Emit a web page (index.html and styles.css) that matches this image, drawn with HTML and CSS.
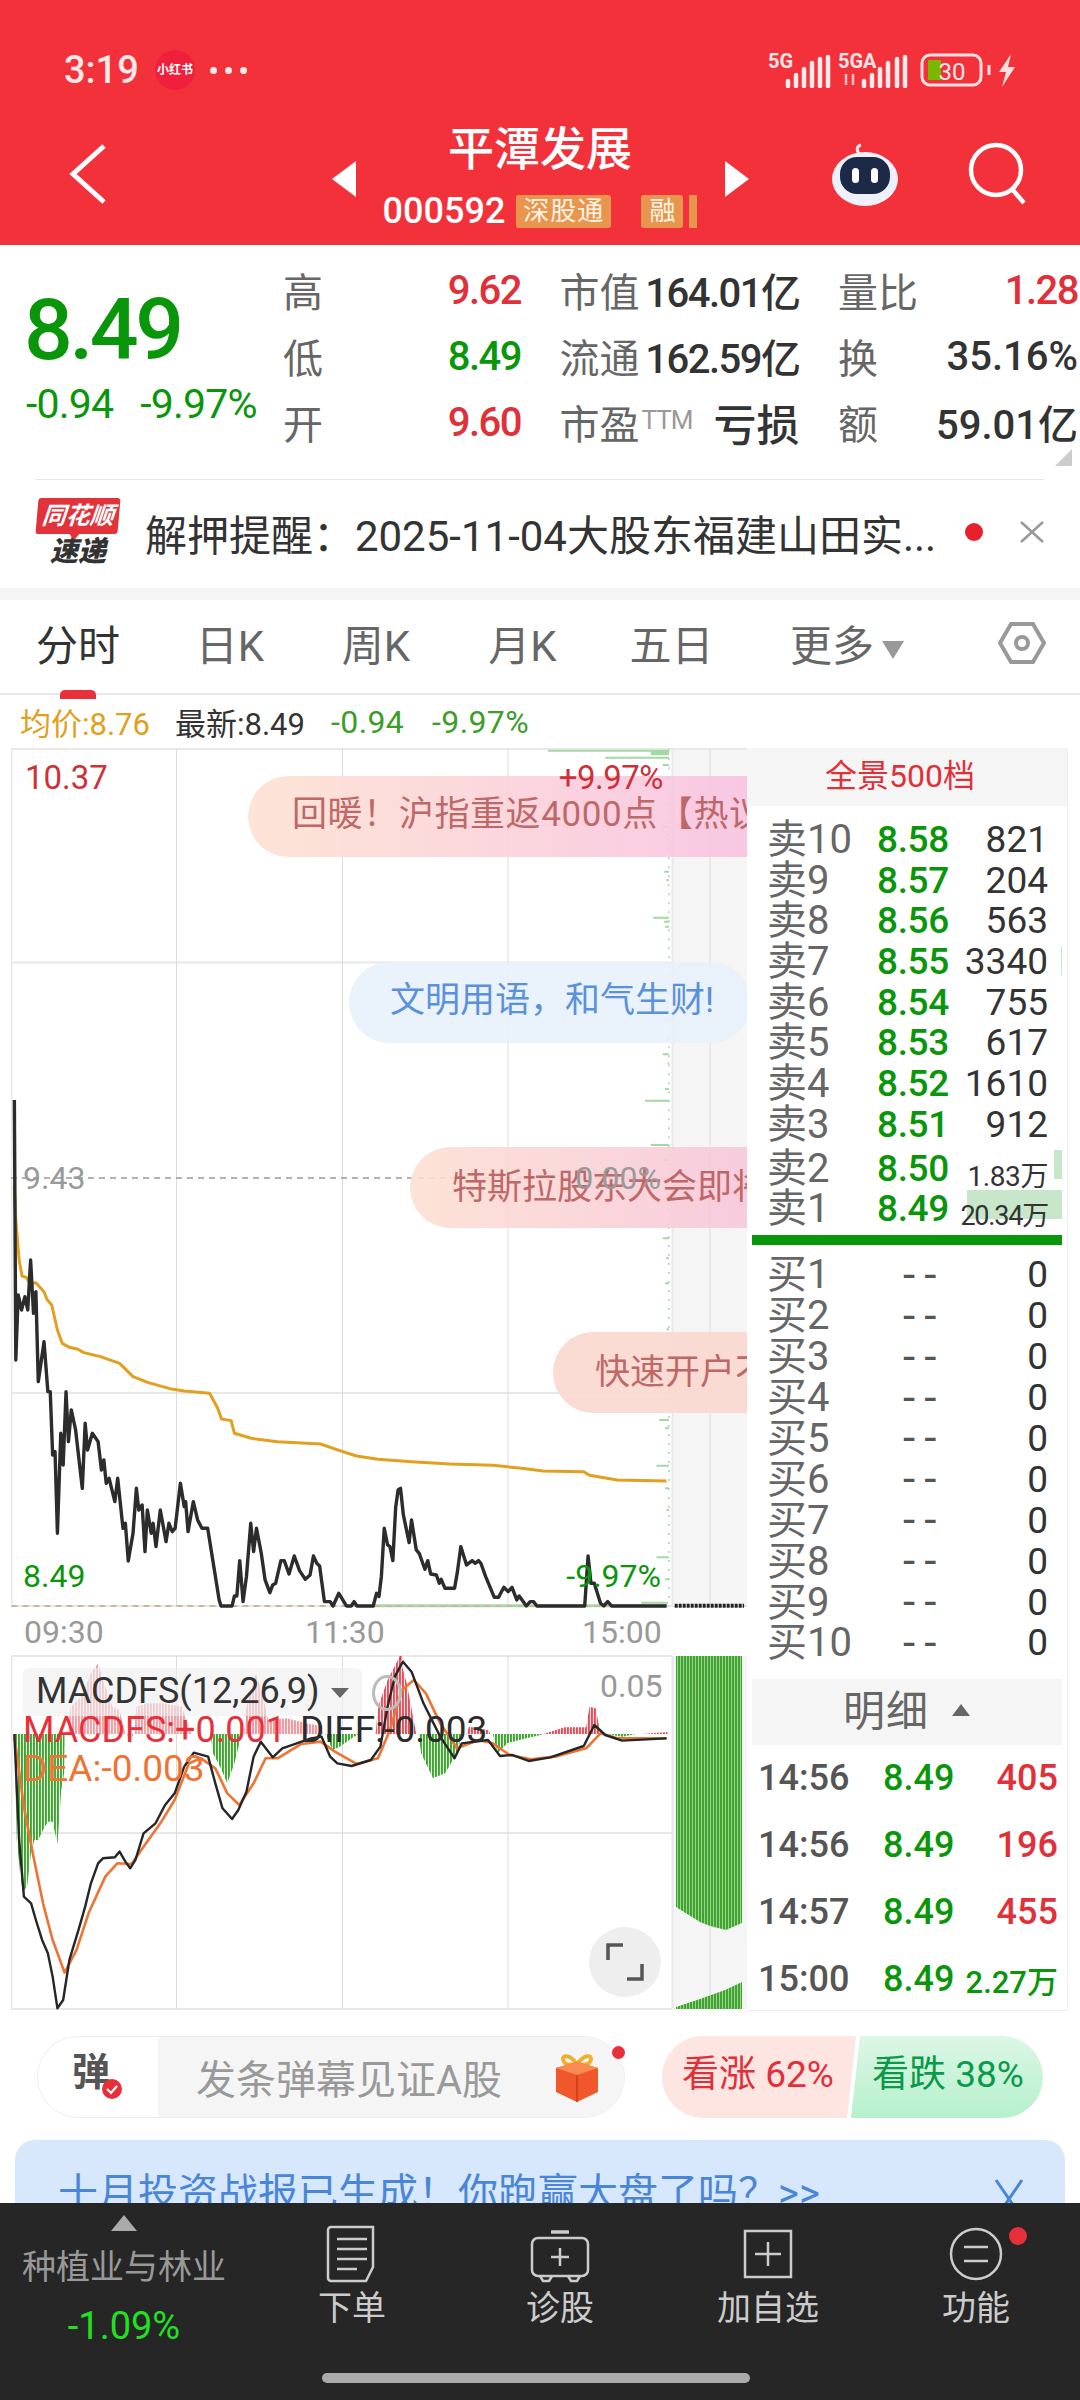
FILE: index.html
```html
<!DOCTYPE html>
<html>
<head lang="zh">
    <meta charset="UTF-8">
    <title>平潭发展</title>
    <link rel="stylesheet" href="styles.css">
</head>
<body>
<div class="page">
    <header class="top">
        <div class="status">
            <div class="status-left">
                <span class="clock">3:19</span>
                <span class="xhs">小红书</span>
                <span class="dots"><i></i><i></i><i></i></span>
            </div>
            <svg class="status-right" width="250" height="36" viewBox="768 52 250 36">
                <text x="768" y="68" class="sig">5G</text>
                <path d="M788 86v-5M796 86v-11M804 86v-17M812 86v-23M820 86v-27M828 86v-29" stroke="#fff" stroke-width="4.5" opacity=".9" stroke-linecap="round"/>
                <text x="838" y="68" class="sig">5GA</text>
                <path d="M846 74v11M853 74v11" stroke="#ffc0c0" stroke-width="2.5"/>
                <path d="M864 86v-5M872 86v-11M880 86v-17M888 86v-23M897 86v-27M905 86v-29" stroke="#fff" stroke-width="4.5" opacity=".9" stroke-linecap="round"/>
                <rect x="922" y="55" width="59" height="30" rx="8" fill="none" stroke="#ffe0e0" stroke-width="3"/>
                <rect x="928" y="60" width="13" height="20" fill="#7ab800"/>
                <text x="952" y="80" text-anchor="middle" class="batt">30</text>
                <path d="M989 65v10" stroke="#ffe0e0" stroke-width="3"/>
                <path d="M1011 54l-12 18h7l-4 15 13-20h-7z" fill="#ffe0e0"/>
            </svg>
        </div>
        <nav class="nav">
            <svg class="back" width="60" height="70" viewBox="0 0 60 70"><path d="M46 6L15 34l31 28" fill="none" stroke="#fff" stroke-width="5"/></svg>
            <div class="stock">
                <span class="tri-left"></span>
                <div class="stock-mid">
                    <div class="stock-name">平潭发展</div>
                    <div class="stock-sub">
                        <span class="code">000592</span>
                        <span class="tag">深股通</span>
                        <span class="tag tag-rong">融</span>
                        <span class="tag-cut"></span>
                    </div>
                </div>
                <span class="tri-right"></span>
            </div>
            <div class="nav-right">
                <svg width="70" height="66" viewBox="0 0 70 66">
                    <path d="M31 14c-5-3-5-9 0-10" fill="none" stroke="#ffe6e6" stroke-width="3"/>
                    <ellipse cx="35" cy="38" rx="33" ry="27" fill="#eef1fa"/>
                    <rect x="10" y="16" width="50" height="37" rx="17" fill="#1c2a48"/>
                    <rect x="22" y="27" width="7" height="15" rx="3.5" fill="#fff"/>
                    <rect x="41" y="27" width="7" height="15" rx="3.5" fill="#fff"/>
                </svg>
                <svg width="60" height="64" viewBox="0 0 60 64">
                    <circle cx="28" cy="29" r="25" fill="none" stroke="#fff" stroke-width="4.5"/>
                    <path d="M44 48l12 14" stroke="#fff" stroke-width="4.5"/>
                </svg>
            </div>
        </nav>
    </header>

    <section class="quote">
        <div class="price-box">
            <div class="price-big">8.49</div>
            <div class="price-change"><span>-0.94</span><span>-9.97%</span></div>
        </div>
        <div class="stats">
            <div class="cell"><span class="k">高</span><span class="v red">9.62</span></div>
            <div class="cell"><span class="k">市值</span><span class="v">164.01亿</span></div>
            <div class="cell"><span class="k">量比</span><span class="v red">1.28</span></div>
            <div class="cell"><span class="k">低</span><span class="v green">8.49</span></div>
            <div class="cell"><span class="k">流通</span><span class="v">162.59亿</span></div>
            <div class="cell"><span class="k">换</span><span class="v wide">35.16%</span></div>
            <div class="cell"><span class="k">开</span><span class="v red">9.60</span></div>
            <div class="cell"><span class="k">市盈<small>TTM</small></span><span class="v loss">亏损</span></div>
            <div class="cell"><span class="k">额</span><span class="v wide">59.01亿</span></div>
        </div>
        <span class="corner"></span>
    </section>

    <section class="news">
        <div class="logo">
            <div class="logo-top">同花顺</div>
            <div class="logo-bot">速递</div>
        </div>
        <div class="news-text">解押提醒：2025-11-04大股东福建山田实...</div>
        <span class="news-dot"></span>
        <svg width="26" height="22" viewBox="0 0 26 22"><path d="M2 1l22 20M24 1L2 21" stroke="#999" stroke-width="2.5"/></svg>
    </section>

    <section class="tabs">
        <div class="tab on">分时</div>
        <div class="tab">日K</div>
        <div class="tab">周K</div>
        <div class="tab">月K</div>
        <div class="tab">五日</div>
        <div class="tab">更多<i class="more"></i></div>
        <svg class="hex" width="48" height="44" viewBox="0 0 48 44">
            <path d="M13 3h22l11 19-11 19H13L2 22z" fill="none" stroke="#999" stroke-width="4"/>
            <circle cx="24" cy="22" r="6" fill="none" stroke="#999" stroke-width="4"/>
        </svg>
    </section>

    <section class="info">
        <span class="avg">均价:8.76</span>
        <span class="last">最新:8.49</span>
        <span class="chg">-0.94</span>
        <span class="chg">-9.97%</span>
    </section>

    <section class="market">
        <div class="chart">
            <svg class="chart-svg" width="736" height="1263" viewBox="11 748 736 1263">
                <defs>
                    <pattern id="gb" width="3" height="10" patternUnits="userSpaceOnUse"><rect width="3" height="10" fill="#9fd291"/><rect width="2" height="10" fill="#3ea52f"/></pattern>
                    <pattern id="hg" width="6.27" height="30" patternUnits="userSpaceOnUse"><rect width="4.4" height="30" fill="#3ea52f"/></pattern>
                    <pattern id="hr" width="6.27" height="30" patternUnits="userSpaceOnUse"><rect width="4.4" height="30" fill="#e4505a"/></pattern>
                </defs>
                <rect x="672" y="749" width="75" height="857" fill="#f5f5f5"/>
                <rect x="672" y="1656" width="75" height="353" fill="#f5f5f5"/>
                <path class="grid" d="M11 749H747M11 962.5H672M11 1393H672M11 1606H747M11 1656H672M11 1833H672M11 2009H672M11.5 749V1606M11.5 1656V2009"/>
                <path class="grid2" d="M176.5 749V1606M342.5 749V1606M508 749V1606M176.5 1656V2009M342.5 1656V2009M508 1656V2009M710 749V1606M710 1656V2009"/>
                <path class="grid" d="M672.5 749V1606M672.5 1656V2009" stroke-width="3"/>
                <path class="dash" d="M11 1178H672"/>

                <g transform="translate(0 730) scale(.4785 .3333)">
                    <path class="vol" d="M1145 62H1398M1360 68H1398M1360 73H1398M1265 83H1398M1385 105H1398M1390 145H1398M1385 290H1398M1392 315H1398M1395 360H1398M1388 425H1398M1393 450H1398M1365 563H1398M1388 575H1398M1390 590H1398M1388 700H1398M1392 830H1398M1392 870H1398M1394 930H1398M1385 973H1398M1395 1000H1398M1390 1077H1398M1348 1112H1398M1360 1245H1398M1385 1290H1398"/>
                    <path class="vol-dots" d="M1398 58V1440"/>
                </g>
                <g transform="translate(0 1200) scale(.4785 .3333)">
                    <path class="vol-dots" d="M1398 0V1216"/>
                    <path class="vol" d="M1385 115H1398M1392 175H1398M1390 250H1398M1393 388H1398M1378 660H1398M1390 685H1398M1372 797H1398M1390 865H1398M1393 930H1398M1372 1072H1398M1390 1138H1398M1340 1208H1396"/>
                    <path d="M780 1217H1395" stroke="#a8d8a8" stroke-width="3" vector-effect="non-scaling-stroke"/>
                    <path class="dash base" d="M24 1218H1395"/>
                    <path class="line avg-line" d="M30 -40L33 60L40 180L46 228L55 232L62 250L75 248L92 275L98 298L108 315L120 390L130 430L145 442L163 448L175 458L210 470L250 490L278 530L310 548L355 566L385 573L438 580L455 625L463 657L483 662L490 700L525 715L580 725L670 732L710 752L745 768L790 778L860 785L940 792L1030 796L1090 805L1135 813L1220 815L1232 826L1290 840L1393 843"/>
                    <path class="line price-line" d="M30 -300L33 480L38 285L45 330L52 290L58 330L64 180L70 340L75 275L80 545L92 425L100 575L105 575L110 765L115 755L120 1000L127 700L132 795L138 575L143 725L149 630L158 690L172 865L178 670L183 750L193 700L205 725L212 810L217 780L222 850L228 835L240 905L246 835L257 985L262 970L268 1083L278 1000L285 865L290 930L297 915L303 1055L308 930L316 1000L320 970L326 1040L335 930L347 1025L353 970L360 995L366 985L377 850L385 920L388 905L393 995L404 905L413 960L422 985L434 985L448 1110L458 1200L462 1218L485 1218L490 1188L495 1188L501 1082L508 1205L515 1130L524 970L530 1055L536 985L546 1060L554 1140L564 1178L570 1155L576 1150L587 1082L594 1082L604 1122L615 1068L626 1112L638 1138L648 1125L655 1068L662 1090L668 1098L678 1205L690 1205L696 1218L708 1180L724 1218L734 1218L740 1205L746 1218L780 1218L787 1180L792 1190L797 1130L803 985L810 1035L815 1040L821 1082L827 920L832 870L837 865L843 945L855 1028L860 960L870 1050L876 1060L888 1108L894 1082L900 1122L912 1125L918 1150L922 1138L930 1165L950 1165L956 1115L963 1040L975 1095L987 1082L993 1090L1000 1082L1005 1090L1015 1130L1033 1192L1042 1192L1053 1162L1062 1175L1070 1162L1080 1200L1085 1188L1100 1218L1108 1205L1115 1205L1122 1218L1222 1218L1229 1068L1235 1150L1242 1150L1255 1210L1262 1218L1270 1205L1278 1218L1393 1218"/>
                    <path class="dark-dash" d="M1410 1217H1555"/>
                </g>

                <polygon fill="url(#gb)" points="676,1656 742,1656 742,1923 726,1930 710,1926 700,1922 676,1907"/>
                <polygon fill="url(#gb)" points="676,2009 742,2009 742,1982 725,1990 700,1999 676,2007"/>

                <g transform="translate(0 1640) scale(.4785 .3333)">
                    <polygon fill="url(#hg)" points="30,282 135,282 134,400 128,450 120,612 110,545 100,545 90,570 80,600 72,600 65,635 57,735 48,760 42,700 35,600"/>
                    <polygon fill="url(#hr)" opacity=".55" points="140,282 148,200 170,170 190,100 205,70 215,120 235,200 250,210 262,282"/>
                    <polygon fill="url(#hg)" points="266,282 278,282 272,310"/>
                    <polygon fill="url(#hr)" opacity=".55" points="280,282 285,200 310,190 340,190 380,200 400,282"/>
                    <polygon fill="url(#hg)" points="440,282 505,282 490,370 475,430 460,380 445,340"/>
                    <polygon fill="url(#hr)" opacity=".6" points="510,282 515,200 535,100 550,170 560,240 600,235 640,250 670,258 675,282"/>
                    <polygon fill="url(#hg)" points="680,282 750,282 740,290 710,320 695,330"/>
                    <polygon fill="url(#hr)" points="785,282 790,200 810,120 835,50 850,130 870,282"/>
                    <polygon fill="url(#hg)" points="875,282 965,282 955,340 930,400 905,415 880,340"/>
                    <polygon fill="url(#hr)" points="975,282 980,260 1020,270 1025,282"/>
                    <polygon fill="url(#hg)" points="1030,282 1135,282 1130,285 1100,295 1060,310 1040,340"/>
                    <polygon fill="url(#hr)" points="1135,282 1180,262 1225,262 1232,200 1245,205 1255,282"/>
                    <polygon fill="url(#hg)" points="1270,282 1330,282 1300,290"/>
                    <polygon fill="url(#hr)" points="1340,282 1395,276 1395,282"/>
                    <path d="M837 48V62" stroke="#e33" stroke-width="2" vector-effect="non-scaling-stroke"/>
                    <path class="line dea-line" d="M30 290L50 500L70 650L90 790L110 900L135 998L160 930L185 820L220 710L245 670L275 672L300 620L335 550L365 480L395 370L420 355L450 385L475 460L500 495L530 430L555 355L580 355L630 312L670 305L700 335L745 372L790 355L815 270L840 150L865 120L890 160L920 250L955 325L1000 300L1030 310L1065 345L1110 358L1160 350L1225 325L1255 280L1290 295L1393 295"/>
                    <path class="line diff-line" d="M30 282L40 600L50 770L65 790L75 840L88 900L100 940L110 1010L120 1105L132 1080L145 960L165 865L178 800L190 730L205 670L215 655L240 652L250 635L262 665L272 685L283 660L300 580L325 550L345 495L365 460L385 380L405 338L435 350L450 430L465 505L485 537L498 510L515 455L530 350L545 305L570 352L590 325L620 310L650 295L672 290L690 350L705 370L735 378L775 360L795 320L810 200L825 110L842 65L860 95L885 190L920 290L950 355L965 310L1020 300L1045 348L1070 345L1105 363L1150 352L1220 318L1242 255L1265 285L1300 302L1393 295"/>
                </g>
            </svg>

            <span class="lb lb-hi">10.37</span>
            <span class="lb lb-mid">9.43</span>

            <div class="pill p1">回暖！沪指重返4000点【热议</div>
            <div class="pill p2">文明用语，和气生财!</div>
            <div class="pill p3">特斯拉股东大会即将</div>
            <div class="pill p4">快速开户不</div>

            <span class="lb lb-midp">0.00%</span>
            <span class="lb lb-hip">+9.97%</span>
            <span class="lb lb-lo">8.49</span>
            <span class="lb lb-lop">-9.97%</span>
            <span class="lb t1">09:30</span>
            <span class="lb t2">11:30</span>
            <span class="lb t3">15:00</span>

            <div class="macd-pick">MACDFS(12,26,9)<i></i></div>
            <span class="macd-info"></span>
            <span class="lb lb-05">0.05</span>
            <span class="lb m1">MACDFS:+0.001</span>
            <span class="lb m2">DIFF:-0.003</span>
            <span class="lb m3">DEA:-0.003</span>
            <div class="expand">
                <svg width="40" height="40" viewBox="0 0 40 40"><path d="M3 18V3h15M37 22v15H22" fill="none" stroke="#555" stroke-width="3.5"/></svg>
            </div>
        </div>

        <aside class="book">
            <div class="book-head">全景500档</div>
            <div class="rows sell">
                <div class="row"><span class="n">卖10</span><span class="p">8.58</span><span class="q">821</span></div>
                <div class="row"><span class="n">卖9</span><span class="p">8.57</span><span class="q">204</span></div>
                <div class="row"><span class="n">卖8</span><span class="p">8.56</span><span class="q">563</span></div>
                <div class="row"><i class="bar" style="width:1px"></i><span class="n">卖7</span><span class="p">8.55</span><span class="q">3340</span></div>
                <div class="row"><span class="n">卖6</span><span class="p">8.54</span><span class="q">755</span></div>
                <div class="row"><span class="n">卖5</span><span class="p">8.53</span><span class="q">617</span></div>
                <div class="row"><span class="n">卖4</span><span class="p">8.52</span><span class="q">1610</span></div>
                <div class="row"><span class="n">卖3</span><span class="p">8.51</span><span class="q">912</span></div>
                <div class="row"><i class="bar" style="width:8px"></i><span class="n">卖2</span><span class="p">8.50</span><span class="q small">1.83万</span></div>
                <div class="row"><i class="bar" style="width:95px"></i><span class="n">卖1</span><span class="p">8.49</span><span class="q small tight">20.34万</span></div>
            </div>
            <div class="book-sep"></div>
            <div class="rows buy">
                <div class="row"><span class="n">买1</span><span class="p none">--</span><span class="q">0</span></div>
                <div class="row"><span class="n">买2</span><span class="p none">--</span><span class="q">0</span></div>
                <div class="row"><span class="n">买3</span><span class="p none">--</span><span class="q">0</span></div>
                <div class="row"><span class="n">买4</span><span class="p none">--</span><span class="q">0</span></div>
                <div class="row"><span class="n">买5</span><span class="p none">--</span><span class="q">0</span></div>
                <div class="row"><span class="n">买6</span><span class="p none">--</span><span class="q">0</span></div>
                <div class="row"><span class="n">买7</span><span class="p none">--</span><span class="q">0</span></div>
                <div class="row"><span class="n">买8</span><span class="p none">--</span><span class="q">0</span></div>
                <div class="row"><span class="n">买9</span><span class="p none">--</span><span class="q">0</span></div>
                <div class="row"><span class="n">买10</span><span class="p none">--</span><span class="q">0</span></div>
            </div>
            <div class="detail-head">明细<i></i></div>
            <div class="detail">
                <div class="d-row"><span>14:56</span><span class="green">8.49</span><span class="red">405</span></div>
                <div class="d-row"><span>14:56</span><span class="green">8.49</span><span class="red">196</span></div>
                <div class="d-row"><span>14:57</span><span class="green">8.49</span><span class="red">455</span></div>
                <div class="d-row"><span>15:00</span><span class="green">8.49</span><span class="green d-small">2.27万</span></div>
            </div>
        </aside>
    </section>

    <section class="talk">
        <div class="danmu">
            <div class="danmu-icon">
                <b>弹</b>
                <svg class="check" width="20" height="20" viewBox="0 0 20 20">
                    <circle cx="10" cy="10" r="10" fill="#e8303a"/>
                    <path d="M5 10l4 4 6-7" fill="none" stroke="#fff" stroke-width="2.2"/>
                </svg>
            </div>
            <div class="danmu-input">
                <span>发条弹幕见证A股</span>
                <svg width="46" height="50" viewBox="0 0 46 50">
                    <path d="M23 12C14 0 6 4 10 10c2 3 8 3 13 2zm0 0C32 0 40 4 36 10c-2 3-8 3-13 2z" fill="none" stroke="#f0b030" stroke-width="4"/>
                    <path d="M2 16l21-6 21 6v24l-21 10L2 40z" fill="#f0582c"/>
                    <path d="M2 16l21 7 21-7-21-6z" fill="#f98a50"/>
                    <path d="M23 23v27" stroke="#d8401c" stroke-width="2"/>
                </svg>
            </div>
            <span class="danmu-dot"></span>
        </div>
        <div class="vote">
            <div class="up">看涨 62%</div>
            <div class="down">看跌 38%</div>
        </div>
    </section>

    <section class="banner">
        <span>十月投资战报已生成！你跑赢大盘了吗？&gt;&gt;</span>
        <svg width="32" height="44" viewBox="0 0 32 44"><path d="M3 4l26 38M29 4L3 42" stroke="#4a86d8" stroke-width="3"/></svg>
    </section>

    <footer class="foot">
        <div class="foot-left">
            <i></i>
            <div class="foot-name">种植业与林业</div>
            <div class="foot-pct">-1.09%</div>
        </div>
        <div class="foot-item">
            <svg width="60" height="60" viewBox="0 0 60 60">
                <path d="M9 2h42v40l-7 14H9a3 3 0 0 1-3-3V5a3 3 0 0 1 3-3z" fill="none" stroke="#ccc" stroke-width="2.5"/>
                <path d="M15 14h30M15 24h30M15 34h30M15 44h20" stroke="#ccc" stroke-width="2.5"/>
            </svg>
            <span>下单</span>
        </div>
        <div class="foot-item">
            <svg width="60" height="60" viewBox="0 0 60 60">
                <path d="M21 7h18" stroke="#ccc" stroke-width="3.5"/>
                <rect x="2" y="13" width="56" height="38" rx="6" fill="none" stroke="#ccc" stroke-width="2.5"/>
                <path d="M10 51l3 5h6l3-5M38 51l3 5h6l3-5" fill="none" stroke="#ccc" stroke-width="2.5"/>
                <path d="M30 23v18M21 32h18" stroke="#ccc" stroke-width="2.5"/>
            </svg>
            <span>诊股</span>
        </div>
        <div class="foot-item">
            <svg width="60" height="60" viewBox="0 0 60 60">
                <rect x="7" y="6" width="46" height="46" fill="none" stroke="#ccc" stroke-width="2.5"/>
                <path d="M30 17v24M17 29h26" stroke="#ccc" stroke-width="2.5"/>
            </svg>
            <span>加自选</span>
        </div>
        <div class="foot-item">
            <svg width="60" height="60" viewBox="0 0 60 60">
                <circle cx="30" cy="29" r="25" fill="none" stroke="#ccc" stroke-width="2.5"/>
                <path d="M18 22h24M18 36h24" stroke="#ccc" stroke-width="2.5"/>
            </svg>
            <span>功能</span>
            <b class="foot-dot"></b>
        </div>
        <div class="home"></div>
    </footer>
</div>
</body>
</html>
```

FILE: styles.css
```css
*{
    margin: 0;
    padding: 0;
    box-sizing: border-box;
}
body{
    font-family: Roboto, "Noto Sans CJK SC", sans-serif;
    background: #fff;
    color: #333;
}
i{
    font-style: normal;
}
.red{
    color: #e0303a;
}
.green{
    color: #0a960a;
}
.page{
    width: 1080px;
    height: 2400px;
    overflow: hidden;
}

/* header */
.top{
    height: 245px;
    background: #f3313b;
    color: #fff;
}
.status{
    height: 100px;
    padding: 50px 62px 0 64px;
    display: flex;
    justify-content: space-between;
    align-items: flex-start;
}
.status-left{
    display: flex;
    align-items: center;
    height: 40px;
}
.clock{
    font-size: 38px;
    font-weight: 500;
    color: #fde8e8;
    width: 91px;
}
.xhs{
    width: 40px;
    height: 40px;
    border-radius: 50%;
    background: #f0203c;
    color: #fff;
    font-size: 12px;
    font-weight: 700;
    line-height: 40px;
    text-align: center;
    white-space: nowrap;
}
.dots{
    display: flex;
    gap: 8px;
    margin-left: 15px;
}
.dots i{
    width: 7px;
    height: 7px;
    border-radius: 50%;
    background: #fde8e8;
}
.status-right{
    margin-top: 2px;
}
.sig{
    font-size: 20px;
    font-weight: 700;
    fill: #ffe6e6;
}
.batt{
    font-size: 24px;
    fill: #ffe6e6;
}
.nav{
    height: 145px;
    position: relative;
    display: flex;
    justify-content: center;
    padding-top: 18px;
}
.back{
    position: absolute;
    left: 58px;
    top: 40px;
}
.stock{
    display: flex;
    align-items: center;
    height: 115px;
}
.tri-left,.tri-right{
    width: 0;
    height: 0;
    border-top: 18px solid transparent;
    border-bottom: 18px solid transparent;
    margin-top: 6px;
}
.tri-left{
    border-right: 24px solid #fff;
}
.tri-right{
    border-left: 24px solid #fff;
}
.stock-mid{
    width: 369px;
    text-align: center;
}
.stock-name{
    font-size: 46px;
    line-height: 52px;
    font-weight: 500;
}
.stock-sub{
    display: flex;
    justify-content: center;
    align-items: center;
    margin-top: 19px;
    height: 34px;
}
.code{
    font-size: 36px;
    font-weight: 500;
    margin-right: 11px;
}
.tag{
    height: 33px;
    line-height: 33px;
    font-size: 26px;
    padding: 0 7px;
    background: #e8954e;
    color: #fff4e6;
    border-radius: 3px;
    letter-spacing: 1px;
}
.tag-rong{
    margin-left: 30px;
    padding: 0 8px;
    letter-spacing: 0;
}
.tag-cut{
    width: 8px;
    height: 33px;
    margin-left: 6px;
    background: #e8954e;
}
.nav-right{
    position: absolute;
    right: 52px;
    top: 41px;
    display: flex;
    gap: 68px;
    align-items: flex-start;
}

/* quote */
.quote{
    height: 235px;
    position: relative;
    padding-top: 12px;
    display: flex;
}
.quote::after{
    content: "";
    position: absolute;
    left: 35px;
    right: 36px;
    bottom: 0;
    height: 1px;
    background: #e8e8e8;
}
.price-box{
    width: 283px;
    padding-left: 24px;
}
.price-big{
    font-size: 86px;
    line-height: 86px;
    margin-top: 30px;
    color: #0a960a;
    font-weight: 500;
    letter-spacing: -3.5px;
}
.price-change{
    display: flex;
    gap: 27px;
    margin-top: 6px;
    margin-left: 2px;
    color: #0a960a;
    font-size: 41px;
    line-height: 50px;
    letter-spacing: -.8px;
    white-space: nowrap;
}
.stats{
    width: 795px;
    display: grid;
    grid-template-columns: 238px 240px 240px;
    grid-auto-rows: 66px;
    column-gap: 38.5px;
}
.cell{
    display: flex;
    justify-content: space-between;
    align-items: center;
    white-space: nowrap;
}
.k{
    font-size: 40px;
    color: #666;
}
.k small{
    font-size: 26px;
    color: #999;
    vertical-align: 10px;
    letter-spacing: -1px;
    margin-left: 2px;
}
.v{
    font-size: 40px;
    font-weight: 500;
    letter-spacing: -1.5px;
}
.v.wide{
    letter-spacing: 0;
}
.v.loss{
    font-size: 43px;
    letter-spacing: 0;
}
.corner{
    position: absolute;
    right: 8px;
    bottom: 14px;
    width: 0;
    height: 0;
    border-left: 17px solid transparent;
    border-bottom: 17px solid #ccc;
}

/* news */
.news{
    height: 108px;
    padding: 0 35px 4px 37px;
    display: flex;
    align-items: center;
}
.logo{
    width: 82px;
    margin-right: 26px;
}
.logo-top{
    height: 36px;
    background: #e2323a;
    color: #fff;
    font-size: 24px;
    font-weight: 700;
    font-style: italic;
    line-height: 36px;
    text-align: center;
    border-radius: 3px;
    transform: skewX(-5deg);
    position: relative;
    white-space: nowrap;
}
.logo-top::after{
    content: "";
    position: absolute;
    left: 34px;
    top: 36px;
    border-top: 6px solid #e2323a;
    border-left: 5px solid transparent;
    border-right: 5px solid transparent;
}
.logo-bot{
    font-size: 28px;
    line-height: 31px;
    margin-top: 2px;
    font-weight: 900;
    font-style: italic;
    color: #333;
    text-align: center;
}
.news-text{
    width: 821px;
    font-size: 42px;
    color: #333;
    white-space: nowrap;
}
.news-dot{
    width: 18px;
    height: 18px;
    border-radius: 50%;
    background: #e8202c;
    margin-right: 36px;
}

/* tabs */
.tabs{
    height: 107px;
    border-top: 12px solid #f5f5f5;
    border-bottom: 2px solid #e8e8e8;
    display: grid;
    grid-template-columns: 156px 148px 144px 149px 149px 202px 1fr;
    align-items: center;
    position: relative;
    padding-bottom: 8px;
}
.tab{
    text-align: center;
    font-size: 42px;
    color: #666;
    white-space: nowrap;
}
.tab.on{
    color: #333;
    position: relative;
}
.tab.on::after{
    content: "";
    position: absolute;
    left: 60px;
    bottom: -26px;
    width: 36px;
    height: 9px;
    background: #e8303a;
    border-radius: 5px 5px 0 0;
}
.more{
    display: inline-block;
    width: 0;
    height: 0;
    margin-left: 8px;
    border-top: 18px solid #999;
    border-left: 11px solid transparent;
    border-right: 11px solid transparent;
    vertical-align: 2px;
}
.hex{
    margin-left: 50px;
}

/* info line */
.info{
    height: 53px;
    padding: 0 0 0 20px;
    display: flex;
    align-items: center;
    font-size: 31px;
    white-space: nowrap;
}
.avg{
    color: #e0a020;
    width: 155px;
}
.last{
    color: #333;
    width: 156px;
}
.chg{
    color: #3c9d2a;
    width: 101px;
    font-size: 32px;
    letter-spacing: .4px;
}

/* chart and order book */
.market{
    height: 1263px;
    padding-left: 11px;
    display: flex;
}
.chart{
    position: relative;
    width: 736px;
    height: 1263px;
    overflow: hidden;
    flex: none;
}
.chart-svg{
    display: block;
}
.grid{
    stroke: #e8e8e8;
    stroke-width: 2;
    fill: none;
}
.grid2{
    stroke: #dcdcdc;
    stroke-width: 1;
    fill: none;
}
.dash{
    stroke: #999;
    stroke-width: 1.5;
    stroke-dasharray: 6 5;
    fill: none;
}
.base{
    stroke: #c8b8a0;
    stroke-width: 2;
    vector-effect: non-scaling-stroke;
}
.vol{
    stroke: #a4d8a4;
    stroke-width: 2;
    fill: none;
    vector-effect: non-scaling-stroke;
}
.vol-dots{
    stroke: #a4d8a4;
    stroke-width: 1.5;
    stroke-dasharray: 2 7;
    fill: none;
    vector-effect: non-scaling-stroke;
}
.line{
    fill: none;
    stroke-linejoin: round;
    vector-effect: non-scaling-stroke;
}
.price-line{
    stroke: #2c2c2c;
    stroke-width: 3.4;
}
.avg-line{
    stroke: #e2a01e;
    stroke-width: 3;
}
.diff-line{
    stroke: #262626;
    stroke-width: 2.4;
}
.dea-line{
    stroke: #ef7434;
    stroke-width: 2.6;
}
.dark-dash{
    stroke: #222;
    stroke-width: 4;
    stroke-dasharray: 3 1;
    vector-effect: non-scaling-stroke;
}
.pill{
    position: absolute;
    right: 0;
    height: 81px;
    line-height: 78px;
    font-size: 35px;
    color: #b85858;
    border-radius: 41px 0 0 41px;
    white-space: nowrap;
    overflow: hidden;
    opacity: .9;
}
.p1{
    top: 28px;
    left: 237px;
    padding-left: 44px;
    letter-spacing: .6px;
    background: linear-gradient(90deg, #fde2d2, #f9c4e2);
}
.p2{
    top: 214px;
    left: 338px;
    padding-left: 41px;
    background: #e8f1fc;
    color: #4a86d8;
    border-radius: 41px;
    right: -4px;
}
.p3{
    top: 399px;
    left: 399px;
    padding-left: 42px;
    line-height: 82px;
    background: linear-gradient(90deg, #fde0d2, #f8c8dc);
}
.p4{
    top: 584px;
    left: 542px;
    padding-left: 42px;
    line-height: 82px;
    background: #fbd9d0;
}
.lb{
    position: absolute;
    white-space: nowrap;
    line-height: 40px;
}
.lb-hi{
    left: 14px;
    top: 10px;
    font-size: 33px;
    color: #d03038;
}
.lb-hip{
    right: 84px;
    top: 10px;
    font-size: 33px;
    color: #d03038;
    letter-spacing: -.5px;
}
.lb-mid{
    left: 12px;
    top: 410px;
    font-size: 32px;
    color: #999;
}
.lb-midp{
    right: 86px;
    top: 410px;
    font-size: 32px;
    color: #999;
}
.lb-lo{
    left: 12px;
    top: 808px;
    font-size: 32px;
    color: #0a960a;
}
.lb-lop{
    right: 86px;
    top: 808px;
    font-size: 32px;
    color: #0a960a;
}
.t1,.t2,.t3{
    top: 864px;
    font-size: 32px;
    color: #999;
}
.t1{
    left: 13px;
}
.t2{
    left: 294px;
}
.t3{
    left: 571px;
}
.macd-pick{
    position: absolute;
    left: 12px;
    top: 920px;
    width: 339px;
    height: 48px;
    padding-left: 13px;
    background: rgba(238,238,238,.6);
    border-radius: 6px;
    font-size: 36px;
    line-height: 46px;
    color: #333;
    white-space: nowrap;
}
.macd-pick i{
    position: absolute;
    left: 308px;
    top: 20px;
    border-top: 10px solid #666;
    border-left: 9px solid transparent;
    border-right: 9px solid transparent;
}
.macd-info{
    position: absolute;
    left: 361px;
    top: 927px;
    width: 30px;
    height: 36px;
    border: 3px solid #bbb;
    border-radius: 50%;
}
.lb-05{
    left: 589px;
    top: 918px;
    font-size: 32px;
    color: #999;
}
.m1,.m2,.m3{
    font-size: 37px;
}
.m1{
    left: 12px;
    top: 962px;
    color: #e8303a;
    font-size: 36px;
}
.m2{
    left: 289px;
    top: 962px;
    color: #2c2c2c;
}
.m3{
    left: 12px;
    top: 1001px;
    color: #ef7434;
}
.expand{
    position: absolute;
    left: 578px;
    top: 1179px;
    width: 72px;
    height: 70px;
    border-radius: 50%;
    background: #eee;
    display: flex;
    align-items: center;
    justify-content: center;
}
.book{
    width: 321px;
    flex: none;
    border-right: 1px solid #eee;
    border-bottom: 1px solid #eee;
    padding-left: 5px;
    padding-right: 5px;
}
.book-head{
    height: 58px;
    margin: 0 -5px;
    padding-right: 14px;
    background: #f5f5f5;
    color: #e0303a;
    font-size: 32px;
    line-height: 56px;
    text-align: center;
}
.rows{
    padding-left: 17px;
}
.sell{
    padding-top: 12px;
}
.row{
    position: relative;
    display: grid;
    grid-template-columns: 108px 78px 1fr;
    align-items: center;
    height: 40.7px;
    padding-right: 14px;
    font-size: 37px;
}
.row span{
    position: relative;
}
.n{
    font-size: 40px;
    margin-left: -2px;
    color: #666;
    white-space: nowrap;
    line-height: 41px;
}
.p{
    color: #0a960a;
    font-weight: 500;
    letter-spacing: -.4px;
    white-space: nowrap;
}
.p.none{
    color: #555;
    font-weight: 400;
    font-size: 44px;
    padding-left: 26px;
    letter-spacing: 9px;
}
.q{
    color: #333;
    text-align: right;
    white-space: nowrap;
}
.q.small{
    font-size: 28px;
    letter-spacing: -.4px;
    padding-top: 10px;
}
.q.tight{
    font-size: 27px;
    letter-spacing: -1.2px;
}
.bar{
    position: absolute;
    right: 0;
    top: 6px;
    height: 29px;
    background: #c8e6c9;
}
.book-sep{
    height: 10px;
    margin-top: 10px;
    background: #0a960a;
}
.buy{
    padding-top: 4px;
}
.buy .row{
    height: 40.9px;
}
.detail-head{
    height: 66px;
    margin-top: 21px;
    background: #f5f5f5;
    text-align: center;
    font-size: 42px;
    line-height: 66px;
    color: #666;
    letter-spacing: 1px;
    position: relative;
    padding-right: 42px;
}
.detail-head i{
    position: absolute;
    left: 200px;
    top: 25px;
    border-bottom: 12px solid #666;
    border-left: 9px solid transparent;
    border-right: 9px solid transparent;
}
.d-row{
    height: 67px;
    display: grid;
    grid-template-columns: 125px 80px 1fr;
    align-items: center;
    padding-left: 6px;
    padding-right: 4px;
    font-size: 36px;
    font-weight: 500;
    color: #555;
}
.d-row span:last-child{
    text-align: right;
}
.d-row .d-small{
    font-size: 31px;
    white-space: nowrap;
}

/* danmu */
.talk{
    height: 129px;
    padding: 25px 37px 0;
    display: flex;
    justify-content: space-between;
}
.danmu{
    position: relative;
    width: 588px;
    height: 82px;
    border: 1px solid #eee;
    border-radius: 41px;
    display: flex;
}
.danmu-icon{
    width: 120px;
    position: relative;
    padding-left: 34px;
    line-height: 70px;
    font-size: 38px;
    color: #555;
}
.check{
    position: absolute;
    left: 64px;
    top: 42px;
}
.danmu-input{
    flex: 1;
    background: #f5f5f5;
    border-radius: 0 41px 41px 0;
    display: flex;
    align-items: center;
    justify-content: space-between;
    padding: 0 24px 0 38px;
    font-size: 40px;
    color: #999;
}
.danmu-dot{
    position: absolute;
    right: -1px;
    top: 9px;
    width: 13px;
    height: 13px;
    border-radius: 50%;
    background: #e8303a;
}
.vote{
    width: 381px;
    height: 82px;
    display: flex;
    font-size: 37px;
    line-height: 78px;
    white-space: nowrap;
}
.up{
    width: 194px;
    padding-left: 20px;
    background: #fde5e2;
    color: #e0303a;
    border-radius: 41px 0 0 41px;
    clip-path: polygon(0 0, 100% 0, calc(100% - 9px) 100%, 0 100%);
}
.down{
    flex: 1;
    margin-left: -5px;
    padding-left: 21px;
    background: linear-gradient(180deg, #dcf7e6, #b6f0cc);
    color: #0a9a4a;
    border-radius: 0 41px 41px 0;
    clip-path: polygon(9px 0, 100% 0, 100% 100%, 0 100%);
}

/* blue banner */
.banner{
    height: 63px;
    margin: 0 15px;
    padding: 29px 40px 0 43px;
    background: #d8e8fc;
    border-radius: 20px 20px 0 0;
    overflow: hidden;
    display: flex;
    justify-content: space-between;
    align-items: flex-start;
    font-size: 40px;
    line-height: 50px;
    color: #4a86d8;
    white-space: nowrap;
}
.banner svg{
    margin-top: 7px;
}

/* bottom bar */
.foot{
    position: relative;
    height: 197px;
    background: #262626;
    display: grid;
    grid-template-columns: 248px repeat(4, 208px);
}
.foot-left{
    text-align: center;
    padding-top: 12px;
}
.foot-left i{
    display: block;
    width: 0;
    height: 0;
    margin: 0 auto;
    border-bottom: 16px solid #aaa;
    border-left: 13px solid transparent;
    border-right: 13px solid transparent;
}
.foot-name{
    margin-top: 12px;
    font-size: 34px;
    line-height: 48px;
    color: #999;
}
.foot-pct{
    margin-top: 12px;
    font-size: 38px;
    line-height: 46px;
    color: #22e022;
}
.foot-item{
    position: relative;
    display: flex;
    flex-direction: column;
    align-items: center;
    padding-top: 22px;
    color: #ccc;
    font-size: 34px;
    line-height: 46px;
}
.foot-dot{
    position: absolute;
    left: 137px;
    top: 24px;
    width: 18px;
    height: 18px;
    border-radius: 50%;
    background: #e8303a;
}
.home{
    position: absolute;
    left: 322px;
    top: 170px;
    width: 428px;
    height: 10px;
    border-radius: 5px;
    background: #aaa;
}
```
